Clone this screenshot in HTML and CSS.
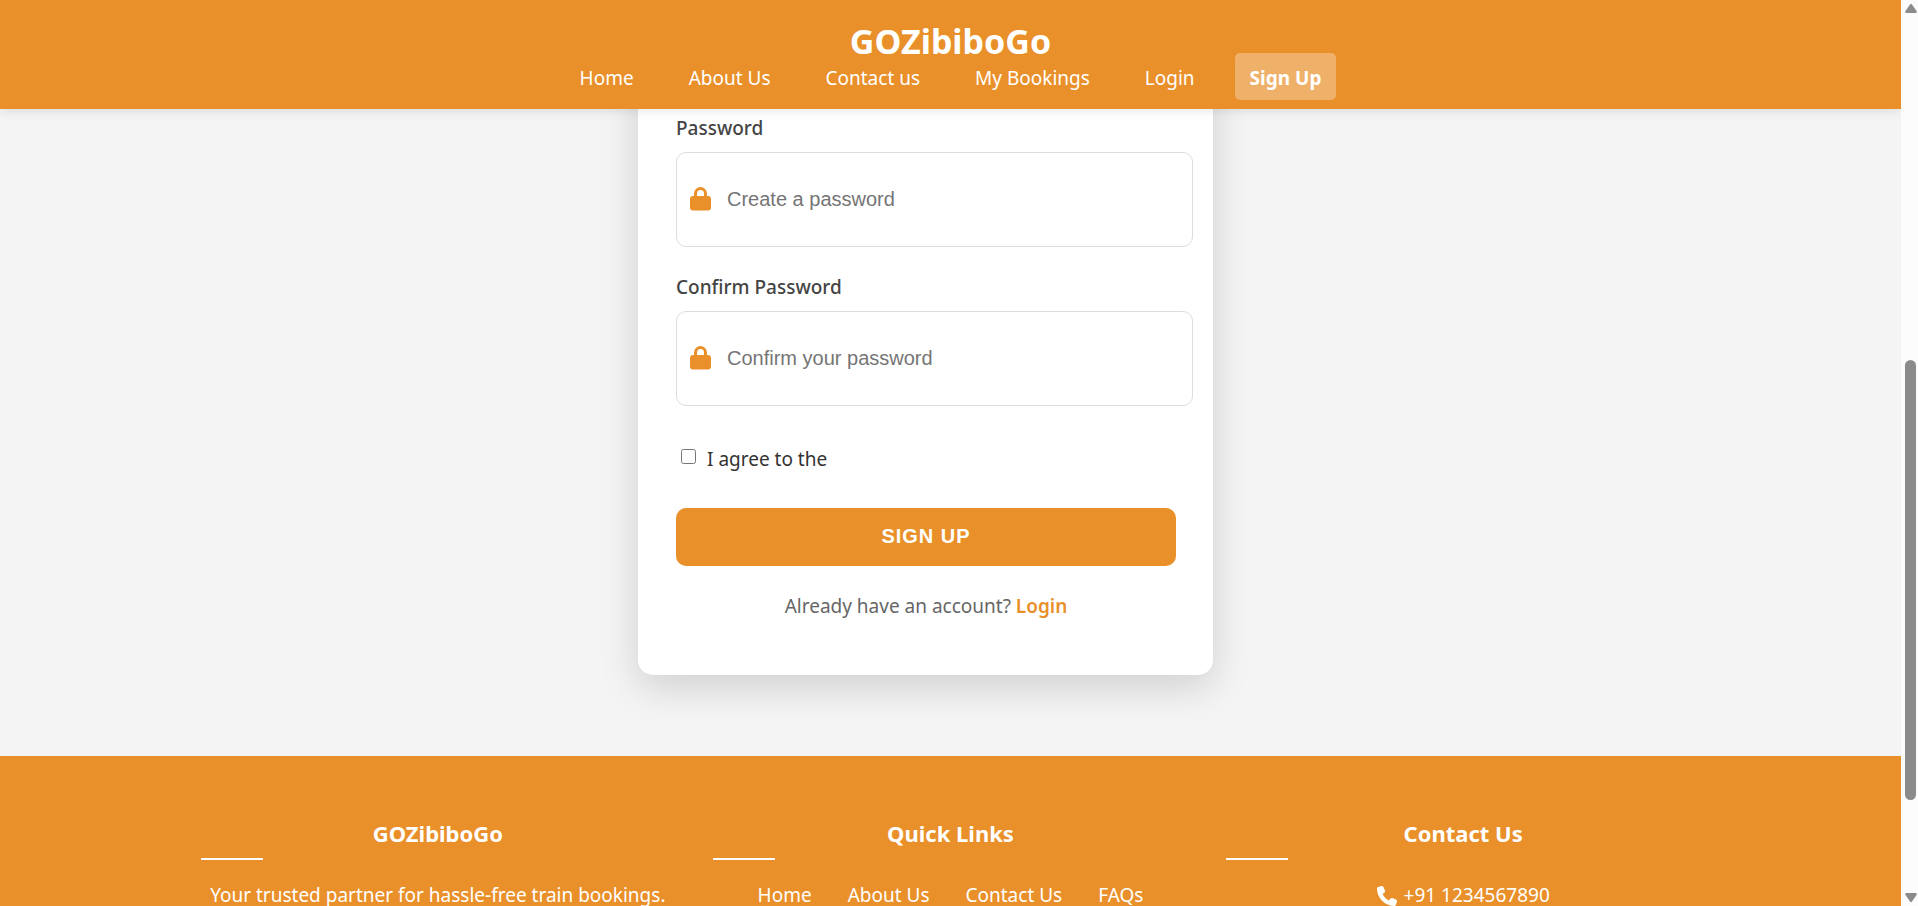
FILE: index.html
```html
<!DOCTYPE html>
<html lang="en">
<head>
<meta charset="utf-8">
<meta name="viewport" content="width=device-width, initial-scale=1">
<title>GOZibiboGo - Sign Up</title>
<link rel="stylesheet" href="styles.css">
</head>
<body>
<div class="page">
  <header class="header">
    <div class="logo">GOZibiboGo</div>
    <nav>
      <ul class="nav">
        <li><a href="#">Home</a></li>
        <li><a href="#">About Us</a></li>
        <li><a href="#">Contact us</a></li>
        <li><a href="#">My Bookings</a></li>
        <li><a href="#">Login</a></li>
        <li><a href="#" class="active">Sign Up</a></li>
      </ul>
    </nav>
  </header>

  <main class="main">
    <form class="card">
      <div class="group">
        <label for="password">Password</label>
        <div class="field">
          <svg class="lock" viewBox="0 0 21 24" aria-hidden="true"><path fill-rule="evenodd" d="M4 9V6.500a6.500 6.500 0 0 1 13 0V9h1a3 3 0 0 1 3 3v8.500a3 3 0 0 1-3 3H3a3 3 0 0 1-3-3V12a3 3 0 0 1 3-3zM7 9h7V6.500a3.500 3.500 0 0 0-7 0z"/></svg>
          <input type="password" id="password" placeholder="Create a password">
        </div>
      </div>
      <div class="group">
        <label for="confirm">Confirm Password</label>
        <div class="field">
          <svg class="lock" viewBox="0 0 21 24" aria-hidden="true"><path fill-rule="evenodd" d="M4 9V6.500a6.500 6.500 0 0 1 13 0V9h1a3 3 0 0 1 3 3v8.500a3 3 0 0 1-3 3H3a3 3 0 0 1-3-3V12a3 3 0 0 1 3-3zM7 9h7V6.500a3.500 3.500 0 0 0-7 0z"/></svg>
          <input type="password" id="confirm" placeholder="Confirm your password">
        </div>
      </div>
      <div class="terms">
        <input type="checkbox" id="terms">
        <label for="terms">I agree to the</label>
      </div>
      <button type="submit" class="submit">SIGN UP</button>
      <p class="login">Already have an account? <a href="#">Login</a></p>
    </form>
  </main>

  <footer class="footer">
    <div class="columns">
      <section class="column">
        <h3>GOZibiboGo</h3>
        <p>Your trusted partner for hassle-free train bookings.</p>
      </section>
      <section class="column">
        <h3>Quick Links</h3>
        <ul class="links">
          <li><a href="#">Home</a></li>
          <li><a href="#">About Us</a></li>
          <li><a href="#">Contact Us</a></li>
          <li><a href="#">FAQs</a></li>
        </ul>
      </section>
      <section class="column">
        <h3>Contact Us</h3>
        <p class="phone"><svg viewBox="0 0 512 512" aria-hidden="true"><path d="M164.900 24.600c-7.700-18.600-28-28.500-47.400-23.200l-88 24C12.100 30.200 0 46 0 64c0 247.400 200.600 448 448 448 18 0 33.800-12.100 38.600-29.500l24-88c5.300-19.400-4.600-39.700-23.200-47.400l-96-40c-16.300-6.800-35.200-2.100-46.300 11.600L304.700 368C234.300 334.700 177.300 277.700 144 207.300L193.300 167c13.700-11.200 18.400-30 11.600-46.300z"/></svg>+91 1234567890</p>
      </section>
    </div>
  </footer>
</div>
<div class="scrollbar" aria-hidden="true">
  <svg viewBox="0 0 12 10"><path d="M5 1.500Q6 0 7 1.500L11.500 8Q12.500 10 10.500 10H1.500Q-.5 10 .5 8z"/></svg>
  <div class="track"><div class="thumb"></div></div>
  <svg viewBox="0 0 12 10"><path d="M5 8.500Q6 10 7 8.500L11.500 2Q12.500 0 10.500 0H1.500Q-.5 0 .5 2z"/></svg>
</div>
</body>
</html>
```

FILE: styles.css
```css
* { box-sizing: border-box; margin: 0; padding: 0; }

body {
  display: flex;
  height: 100vh;
  overflow: hidden;
  background: #f4f4f4;
  color: #333;
  font-family: "Segoe UI", "Noto Sans", sans-serif;
  font-size: 19px;
  line-height: 27px;
}

a { color: inherit; text-decoration: none; }
ul { list-style: none; }

.page { flex: 1; min-width: 0; overflow: hidden; }

.header {
  position: relative;
  z-index: 1;
  padding: 19px 19px 17px;
  background: #e9902a;
  color: #fff;
  text-align: center;
  box-shadow: 0 2px 10px rgba(0, 0, 0, 0.1);
}
.logo { margin-bottom: 2px; font-size: 34px; font-weight: 700; line-height: 44px; }
.nav { display: flex; justify-content: center; gap: 25px; }
.nav a { padding: 12px 15px 9px; border-radius: 5px; }
.nav .active { background: rgba(255, 255, 255, 0.3); font-weight: 700; }

.main {
  display: flex;
  justify-content: center;
  padding: 0 50px 81px 0;
  overflow: hidden;
}
.card {
  width: 575px;
  max-width: 100%;
  margin-top: -50px;
  padding: 56px 37px 55px 38px;
  border-radius: 15px;
  background: #fff;
  box-shadow: 0 12px 38px rgba(0, 0, 0, 0.15);
}
.group { margin-bottom: 27px; }
.group label { display: block; margin-bottom: 10px; color: #444; font-weight: 500; }
.field { position: relative; margin-right: -17px; }
.field input {
  display: block;
  width: 100%;
  height: 95px;
  padding: 0 20px 0 50px;
  border: 1px solid #ddd;
  border-radius: 10px;
  background: #fff;
  font: 20px "Liberation Sans", Arial, sans-serif;
}
.field input::placeholder { color: #757575; }
.lock {
  position: absolute;
  top: 35px;
  left: 14px;
  width: 21px;
  height: 24px;
  fill: #e9902a;
}
.terms { display: flex; gap: 11px; margin: 40px 0 35px; padding-left: 5px; }
.terms input { width: 15px; height: 15px; margin-top: 3px; }
.submit {
  display: block;
  width: 100%;
  height: 58px;
  padding-bottom: 2px;
  border: 0;
  border-radius: 10px;
  background: #e9902a;
  color: #fff;
  font: 700 20px "Liberation Sans", Arial, sans-serif;
  letter-spacing: 1px;
}
.login { margin-top: 27px; color: #666; text-align: center; }
.login a { color: #e9902a; font-weight: 600; }

.footer { padding: 62px 40px 50px; background: #e9902a; color: #fff; text-align: center; }
.columns {
  display: grid;
  grid-template-columns: repeat(3, 1fr);
  gap: 38px;
  max-width: 1500px;
  margin: 0 auto;
}
.column h3 { margin-bottom: 22px; font-size: 22px; font-weight: 700; line-height: 30px; }
.column h3::after {
  content: "";
  display: block;
  width: 62px;
  height: 2px;
  margin-top: 10px;
  background: #fff;
}
.links { display: flex; justify-content: center; gap: 36px; }
.phone { display: flex; justify-content: center; align-items: center; gap: 7px; }
.phone svg { width: 20px; height: 20px; fill: #fff; }

.scrollbar {
  display: flex;
  flex-direction: column;
  align-items: center;
  width: 17px;
  padding: 3px 0 3px 2px;
  background: #fcfcfc;
}
.scrollbar svg { width: 12px; height: 10px; fill: #8b8b8b; }
.track { display: flex; flex: 1; flex-direction: column; padding: 347px 0 93px; }
.thumb { flex: 1; width: 11px; border-radius: 6px; background: #8b8b8b; }
```
